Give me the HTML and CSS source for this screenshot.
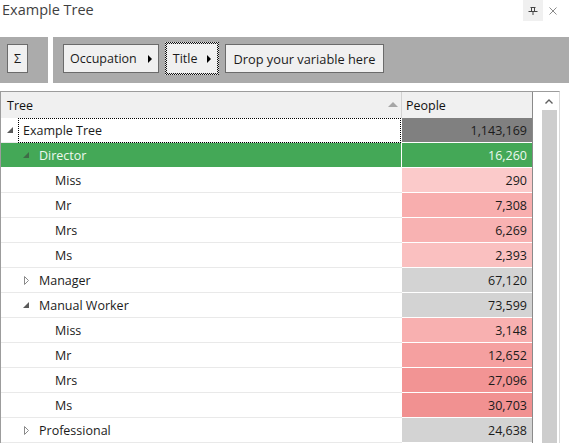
FILE: index.html
```html
<!DOCTYPE html>
<html lang="en">
<head>
<meta charset="utf-8">
<title>Example Tree</title>
<link rel="stylesheet" href="styles.css">
</head>
<body>
<div class="panel">
  <header class="titlebar">
    <span class="title">Example Tree</span>
    <div class="win-btns">
      <span class="win-btn pin">
        <svg width="10" height="10" viewBox="0 0 10 10"><path d="M2.5 1.5H7.5M3.5 1.5V5M6.5 1.5V5M0.5 5.5H9.5M5 5.5V9" fill="none" stroke="#444" stroke-width="1"/></svg>
      </span>
      <span class="win-btn close">
        <svg width="8" height="8" viewBox="0 0 8 8"><path d="M0.5 0.5L7.5 7.5M7.5 0.5L0.5 7.5" fill="none" stroke="#8a8a8a" stroke-width="1"/></svg>
      </span>
    </div>
  </header>

  <div class="toolbar">
    <div class="tb-left">
      <button class="chip sigma">Σ</button>
    </div>
    <div class="tb-right">
      <button class="chip">Occupation<span class="arrow"></span></button>
      <button class="chip focused">Title<span class="arrow"></span></button>
      <button class="chip drop">Drop your variable here</button>
    </div>
  </div>

  <div class="tree-view">
    <div class="cols">
      <div class="row head">
        <div class="cell tree-cell head-cell">Tree<span class="sort"></span></div>
        <div class="cell num-cell head-cell people-head">People</div>
      </div>

      <div class="row">
        <div class="cell tree-cell lvl0"><span class="twisty"><svg width="6" height="6" viewBox="0 0 6 6"><path d="M6 0V6H0Z" fill="#5a5a5a"/></svg></span><span class="label focus">Example Tree</span></div>
        <div class="cell num-cell total">1,143,169</div>
      </div>
      <div class="row selected">
        <div class="cell tree-cell lvl1"><span class="twisty"><svg width="6" height="6" viewBox="0 0 6 6"><path d="M6 0V6H0Z" fill="#3f6b47"/></svg></span><span class="label">Director</span></div>
        <div class="cell num-cell">16,260</div>
      </div>
      <div class="row">
        <div class="cell tree-cell lvl2"><span class="twisty"></span><span class="label">Miss</span></div>
        <div class="cell num-cell" style="background:#fbcaca">290</div>
      </div>
      <div class="row">
        <div class="cell tree-cell lvl2"><span class="twisty"></span><span class="label">Mr</span></div>
        <div class="cell num-cell" style="background:#f8aeae">7,308</div>
      </div>
      <div class="row">
        <div class="cell tree-cell lvl2"><span class="twisty"></span><span class="label">Mrs</span></div>
        <div class="cell num-cell" style="background:#f8b2b2">6,269</div>
      </div>
      <div class="row">
        <div class="cell tree-cell lvl2"><span class="twisty"></span><span class="label">Ms</span></div>
        <div class="cell num-cell" style="background:#fac0c0">2,393</div>
      </div>
      <div class="row">
        <div class="cell tree-cell lvl1"><span class="twisty"><svg width="5" height="9" viewBox="0 0 5 9"><path d="M0.5 0.5L4.5 4.5L0.5 8.5Z" fill="none" stroke="#8a8a8a" stroke-width="1"/></svg></span><span class="label">Manager</span></div>
        <div class="cell num-cell group">67,120</div>
      </div>
      <div class="row">
        <div class="cell tree-cell lvl1"><span class="twisty"><svg width="6" height="6" viewBox="0 0 6 6"><path d="M6 0V6H0Z" fill="#5a5a5a"/></svg></span><span class="label">Manual Worker</span></div>
        <div class="cell num-cell group">73,599</div>
      </div>
      <div class="row">
        <div class="cell tree-cell lvl2"><span class="twisty"></span><span class="label">Miss</span></div>
        <div class="cell num-cell" style="background:#f8b0b0">3,148</div>
      </div>
      <div class="row">
        <div class="cell tree-cell lvl2"><span class="twisty"></span><span class="label">Mr</span></div>
        <div class="cell num-cell" style="background:#f5a0a0">12,652</div>
      </div>
      <div class="row">
        <div class="cell tree-cell lvl2"><span class="twisty"></span><span class="label">Mrs</span></div>
        <div class="cell num-cell" style="background:#f29494">27,096</div>
      </div>
      <div class="row">
        <div class="cell tree-cell lvl2"><span class="twisty"></span><span class="label">Ms</span></div>
        <div class="cell num-cell" style="background:#f19191">30,703</div>
      </div>
      <div class="row">
        <div class="cell tree-cell lvl1"><span class="twisty"><svg width="5" height="9" viewBox="0 0 5 9"><path d="M0.5 0.5L4.5 4.5L0.5 8.5Z" fill="none" stroke="#8a8a8a" stroke-width="1"/></svg></span><span class="label">Professional</span></div>
        <div class="cell num-cell group">24,638</div>
      </div>
    </div>

    <div class="vscroll">
      <div class="scroll-up">
        <svg width="8" height="5" viewBox="0 0 8 5"><path d="M0.5 4.5L4 1L7.5 4.5" fill="none" stroke="#606060" stroke-width="1.4"/></svg>
      </div>
      <div class="thumb"></div>
    </div>
  </div>
</div>
</body>
</html>
```

FILE: styles.css
```css
html, body {
  margin: 0;
  padding: 0;
  background: #ffffff;
}

body {
  width: 569px;
  height: 443px;
  overflow: hidden;
  font-family: "Open Sans", "Noto Sans", sans-serif;
  color: #1b1b1b;
}

.panel {
  display: flex;
  flex-direction: column;
  height: 443px;
}

/* ---- title bar ---- */
.titlebar {
  height: 37px;
  display: flex;
  justify-content: space-between;
  align-items: flex-start;
  flex: none;
}

.title {
  font-size: 14.5px;
  line-height: 20px;
  color: #3f3f3f;
  padding-left: 2px;
}

.win-btns {
  display: flex;
  margin-right: 6px;
}

.win-btn {
  width: 20px;
  height: 21px;
  display: flex;
  align-items: center;
  justify-content: center;
}

.pin {
  background: #f0f0f0;
}

/* ---- field well toolbar ---- */
.toolbar {
  height: 46px;
  display: flex;
  gap: 5px;
  flex: none;
}

.tb-left,
.tb-right {
  background: #ababab;
  box-sizing: border-box;
  padding-top: 7px;
}

.tb-left {
  width: 48px;
  padding-left: 7px;
}

.tb-right {
  flex: 1;
  display: flex;
  align-items: flex-start;
  gap: 6px;
  padding-left: 10px;
}

.chip {
  height: 29px;
  box-sizing: border-box;
  border: 1px solid #6b6b6b;
  background: #f0f0f0;
  font-family: inherit;
  font-size: 12.5px;
  color: #1b1b1b;
  padding: 0 6px;
  display: flex;
  align-items: center;
  cursor: default;
}

.chip.drop {
  padding: 0 8px 0 7px;
  font-size: 12.8px;
}

.sigma {
  width: 21px;
  padding: 0;
  justify-content: center;
}

.arrow {
  width: 0;
  height: 0;
  border-top: 4px solid transparent;
  border-bottom: 4px solid transparent;
  border-left: 4px solid #000;
  margin-left: 11px;
}

.focused {
  height: 33px;
  margin-top: -2px;
  border: 2px solid transparent;
  background:
    linear-gradient(#f0f0f0, #f0f0f0) padding-box,
    repeating-conic-gradient(#111 0 25%, #e6e6e6 0 50%) 0 0 / 2px 2px border-box;
  padding: 0 6px 0 6px;
}

.focused .arrow {
  margin-left: 10px;
}

/* ---- tree grid ---- */
.tree-view {
  margin-top: 8px;
  width: 560px;
  flex: 1;
  min-height: 0;
  box-sizing: border-box;
  display: flex;
  border-top: 1px solid #9c9c9c;
  border-left: 1px solid #9c9c9c;
  border-right: 1px solid #dadada;
}

.cols {
  width: 531px;
  border-right: 1px solid #8a8a8a;
  flex: none;
}

.row {
  display: grid;
  grid-template-columns: 400px 130px;
  column-gap: 1px;
  height: 25px;
  box-sizing: border-box;
  border-bottom: 1px solid #e9e9e9;
  font-size: 12.5px;
}

.row.head {
  height: 26px;
  background: #f0f0f0;
  border-bottom: none;
  column-gap: 0;
  grid-template-columns: 401px 130px;
}

.cell {
  display: flex;
  align-items: center;
  min-width: 0;
  white-space: nowrap;
}

.head-cell {
  padding-left: 6px;
  color: #111;
}

.head .tree-cell {
  position: relative;
  border-right: 1px solid #d2d2d2;
}

.sort {
  position: absolute;
  right: 3px;
  top: 10px;
  width: 0;
  height: 0;
  border-left: 5px solid transparent;
  border-right: 5px solid transparent;
  border-bottom: 5px solid #a6a6a6;
}

.people-head {
  padding-left: 4px;
}

.tree-cell {
  box-sizing: border-box;
}

.lvl0 { padding-left: 6px; }
.lvl1 { padding-left: 22px; }
.lvl2 { padding-left: 38px; }

.twisty {
  width: 16px;
  flex: none;
  display: flex;
  align-items: center;
}

.lvl1 .twisty svg[height="9"] {
  margin-left: 1px;
}

.label.focus {
  align-self: stretch;
  flex: 1;
  display: flex;
  align-items: center;
  margin-left: -5px;
  padding-left: 4px;
  border: 1px dotted #000;
  margin-bottom: -1px;
}

.num-cell {
  justify-content: flex-end;
  padding-right: 5px;
  margin-bottom: -1px;
  border-bottom: 1px solid #ffffff;
}

.head .num-cell {
  justify-content: flex-start;
  margin-bottom: 0;
  border-bottom: none;
}

.total {
  background: #808080;
}

.group {
  background: #d3d3d3;
}

.row.selected {
  background: #44a857;
  border-bottom-color: #ffffff;
  color: #eef8ef;
}

.row.selected .tree-cell {
  border-right: 1px solid #ffffff;
  margin-right: -1px;
}

/* ---- vertical scrollbar ---- */
.vscroll {
  flex: 1;
  display: flex;
  flex-direction: column;
}

.scroll-up {
  height: 18px;
  display: flex;
  align-items: center;
  justify-content: center;
  padding-left: 5px;
}

.thumb {
  flex: 1;
  margin-left: 9px;
  width: 15px;
  background: #cdcdcd;
}
```
